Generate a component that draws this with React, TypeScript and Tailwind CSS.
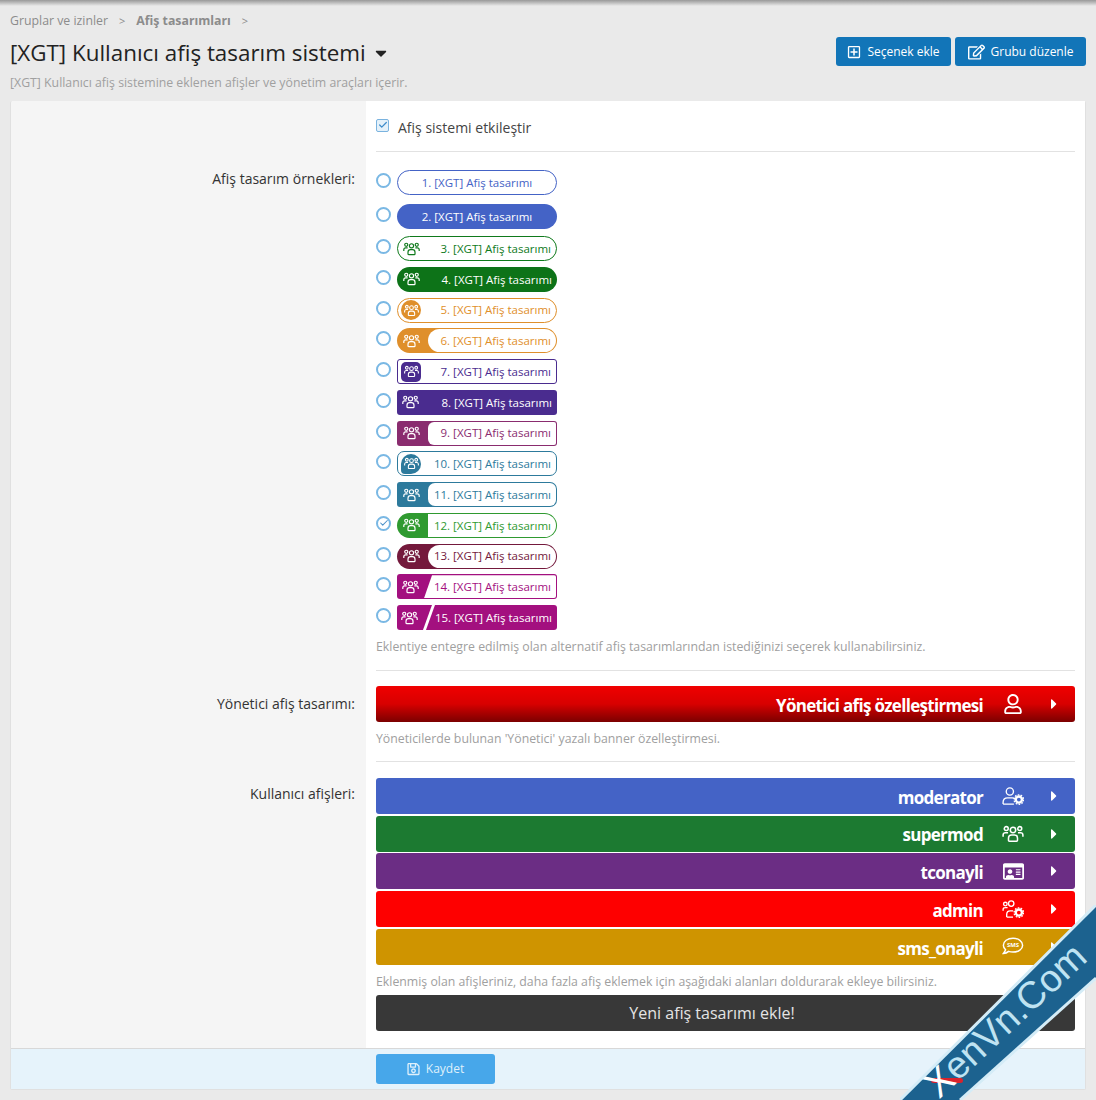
import React from 'react';
import { Check } from 'lucide-react';
import { FaCaretDown, FaCaretRight, FaRegEdit, FaRegIdCard, FaRegPlusSquare, FaRegSave, FaRegUser } from 'react-icons/fa';

const GroupIcon = ({ className = 'w-[17px] h-[14px]' }: { className?: string }) => (
  <svg viewBox="0 0 24 20" fill="none" stroke="currentColor" strokeWidth="1.7" className={className}>
    <circle cx="12" cy="5.5" r="3" />
    <circle cx="4.5" cy="4" r="2.2" />
    <circle cx="19.5" cy="4" r="2.2" />
    <path d="M7 17v-2.5C7 12.5 8.5 11 10.5 11h3c2 0 3.500 1.500 3.500 3.500V17c0 .6-.4 1-1 1H8c-.6 0-1-.4-1-1Z" />
    <path d="M1 13v-2c0-1.400 1-2.500 2.500-2.500h3" />
    <path d="M23 13v-2c0-1.400-1-2.500-2.500-2.500h-3" />
  </svg>
);

const CogMark = ({ cx, cy }: { cx: number; cy: number }) => (
  <g>
    <circle cx={cx} cy={cy} r="3.4" fill="none" stroke="currentColor" strokeWidth="2.600" />
    <circle cx={cx} cy={cy} r="5.300" fill="none" stroke="currentColor" strokeWidth="1.500" strokeDasharray="1.800 1.500" />
  </g>
);

const ModeratorIcon = () => (
  <svg viewBox="0 0 24 20" fill="none" stroke="currentColor" strokeWidth="1.500" className="w-[22px] h-[18px]">
    <circle cx="8.500" cy="5" r="4" />
    <path d="M1 19v-2c0-3 2-5 5-5h5c1.500 0 2.500.5 3.500 1.300M1 19h12" />
    <CogMark cx={18.500} cy={14} />
  </svg>
);

const AdminIcon = () => (
  <svg viewBox="0 0 24 20" fill="none" stroke="currentColor" strokeWidth="1.500" className="w-[22px] h-[18px]">
    <circle cx="10" cy="4" r="3" />
    <circle cx="3.500" cy="4.500" r="2" />
    <path d="M1 12v-1.500C1 9 2 8.500 3.500 8.500H6M5 19v-3c0-2.500 1.500-4 4-4h3M5 19h7" />
    <CogMark cx={18.500} cy={14} />
  </svg>
);

const SmsIcon = () => (
  <svg viewBox="0 0 24 20" fill="none" className="w-[22px] h-[19px]">
    <path d="M12 1C6 1 1.500 4.300 1.500 8.600c0 1.900.9 3.600 2.400 4.900-.4 1.600-1.500 3-2.400 4.100 2.200-.1 4.300-1 5.700-2.300 1.500.5 3.100.8 4.800.8 6 0 10.500-3.300 10.500-7.500S18 1 12 1Z" stroke="currentColor" strokeWidth="1.600" />
    <text x="12" y="10.800" textAnchor="middle" fill="currentColor" style={{ fontSize: 6.500, fontWeight: 700 }}>SMS</text>
  </svg>
);

const label = '[XGT] Afiş tasarımı';

const Banner = ({ n }: { n: number }) => {
  const text = `${n}. ${label}`;
  const base = "h-[25px] w-[160px] flex overflow-hidden text-[11.5px] leading-none";
  const txt = "flex-1 flex items-center justify-end pr-[5px] whitespace-nowrap";
  const seg = "w-[30px] pr-[3px] flex items-center justify-center text-white";

  switch (n) {
    case 1:
      return <div className={`${base} rounded-full border border-[#4463c6] bg-white text-[#4463c6] justify-center items-center`}>{text}</div>;
    case 2:
      return <div className={`${base} rounded-full bg-[#4463c6] text-white justify-center items-center`}>{text}</div>;
    case 3:
      return (
        <div className={`${base} rounded-full border border-[#0f7a1c] bg-white text-[#0f7a1c]`}>
          <div className="w-[29px] pr-[3px] flex items-center justify-center"><GroupIcon /></div>
          <div className={txt}>{text}</div>
        </div>
      );
    case 4:
      return (
        <div className={`${base} rounded-full bg-[#0d7318] text-white`}>
          <div className="w-[32px] pr-[4px] flex items-center justify-center"><GroupIcon /></div>
          <div className={txt}>{text}</div>
        </div>
      );
    case 5:
      return (
        <div className={`${base} rounded-full border border-[#df8f2b] bg-white text-[#df8f2b] pl-[3px] items-center`}>
          <div className="w-[20px] h-[20px] rounded-full bg-[#df8f2b] flex items-center justify-center text-white shrink-0"><GroupIcon className="w-[15px] h-[13px]" /></div>
          <div className={txt + ' h-full'}>{text}</div>
        </div>
      );
    case 6:
      return (
        <div className={`${base} rounded-full bg-[#df8f2b] p-px`}>
          <div className={seg}><GroupIcon /></div>
          <div className={`${txt} bg-white rounded-full text-[#df8f2b]`}>{text}</div>
        </div>
      );
    case 7:
      return (
        <div className={`${base} rounded-[3px] border border-[#4a2c8f] bg-white text-[#4a2c8f] pl-[3px] items-center`}>
          <div className="w-[20px] h-[20px] rounded-[5px] bg-[#4a2c8f] flex items-center justify-center text-white shrink-0"><GroupIcon className="w-[15px] h-[13px]" /></div>
          <div className={txt + ' h-full'}>{text}</div>
        </div>
      );
    case 8:
      return (
        <div className={`${base} rounded-[3px] bg-[#4a2c8f] text-white`}>
          <div className={seg}><GroupIcon /></div>
          <div className={`${txt} pr-[4px]`}>{text}</div>
        </div>
      );
    case 9:
      return (
        <div className={`${base} rounded-[3px] bg-[#8a2c6f] p-px`}>
          <div className={seg}><GroupIcon /></div>
          <div className={`${txt} bg-white rounded-l-[6px] rounded-r-[2px] text-[#8a2c6f]`}>{text}</div>
        </div>
      );
    case 10:
      return (
        <div className={`${base} rounded-[7px] border border-[#2d7a9c] bg-white text-[#2d7a9c] pl-[3px] items-center`}>
          <div className="w-[20px] h-[20px] rounded-[10px_10px_10px_4px] bg-[#2d7a9c] flex items-center justify-center text-white shrink-0"><GroupIcon className="w-[15px] h-[13px]" /></div>
          <div className={txt + ' h-full'}>{text}</div>
        </div>
      );
    case 11:
      return (
        <div className={`${base} rounded-[7px] rounded-l-[3px] bg-[#2d7a9c] p-px`}>
          <div className={seg}><GroupIcon /></div>
          <div className={`${txt} bg-white rounded-l-[7px] rounded-r-[6px] text-[#2d7a9c]`}>{text}</div>
        </div>
      );
    case 12:
      return (
        <div className={`${base} rounded-full bg-[#2f9a30] p-px`}>
          <div className={seg}><GroupIcon /></div>
          <div className={`${txt} bg-white rounded-r-full text-[#2f9a30]`}>{text}</div>
        </div>
      );
    case 13:
      return (
        <div className={`${base} rounded-full bg-[#74193c] p-px`}>
          <div className={seg}><GroupIcon /></div>
          <div className={`${txt} bg-white rounded-full text-[#74193c]`}>{text}</div>
        </div>
      );
    case 14:
      return (
        <div className={`${base} rounded-[3px] bg-[#a3107f] p-px`}>
          <div className="w-[26px] pr-[1px] flex items-center justify-center text-white"><GroupIcon /></div>
          <div className={`${txt} bg-white rounded-r-[2px] text-[#a3107f] [clip-path:polygon(8px_0,100%_0,100%_100%,0_100%)]`}>{text}</div>
        </div>
      );
    default:
      return (
        <div className={`${base} rounded-[3px] bg-[#a3107f] text-white`}>
          <div className="w-[26px] flex items-center justify-center"><GroupIcon /></div>
          <div className="w-[12px] bg-white [clip-path:polygon(9px_0,12px_0,3px_100%,0_100%)]" />
          <div className={txt}>{text}</div>
        </div>
      );
  }
};

const Radio = ({ checked }: { checked?: boolean }) => (
  <span className="w-[15px] h-[15px] rounded-full border-2 border-[#7ab8e4] bg-white flex items-center justify-center text-[#4a90c8] shrink-0 -mt-[4px]">
    {checked && <Check className="w-[10px] h-[10px]" strokeWidth={2.500} />}
  </span>
);

const Bar = ({ name, bg, icon }: { name: string; bg: string; icon: React.ReactNode }) => (
  <div className={`${bg} h-[36px] rounded-[3px] flex items-center justify-end text-white text-[17px] font-bold`}>
    <span className="tracking-[-0.7px] mt-[3px]">{name}</span>
    <span className="w-[22px] ml-[19px] flex justify-center">{icon}</span>
    <FaCaretRight className="w-[10px] h-[16px] ml-[25px] mr-[16px]" />
  </div>
);

const Row = ({ title, children, titleClass }: { title?: string; children: React.ReactNode; titleClass?: string }) => (
  <div className="flex">
    <div className={`w-[355px] shrink-0 pr-[11px] text-right text-[#333] text-[14px] ${titleClass ?? ''}`}>{title}</div>
    <div className="flex-1 bg-white pl-[10px] pr-[10px] min-w-0">{children}</div>
  </div>
);

const Hint = ({ children, className = '' }: { children: React.ReactNode; className?: string }) => (
  <p className={`text-[12.3px] text-[#a0a0a0] leading-[16px] ${className}`}>{children}</p>
);

export default function App() {
  return (
    <div className="relative h-[1100px] overflow-hidden bg-[#eaeaea] text-[#333] font-['Open_Sans',sans-serif]">
      <div className="h-[6px] bg-gradient-to-b from-[#999999] to-[#eaeaea]" />

      <div className="px-[10px]">
        <div className="flex items-center h-[16px] mt-[7px] text-[12.300px] text-[#8c8c8c] gap-[11px]">
          <span>Gruplar ve izinler</span>
          <span className="text-[11px]">&gt;</span>
          <span className="font-bold">Afiş tasarımları</span>
          <span className="text-[11px]">&gt;</span>
        </div>

        <div className="flex justify-between items-start mt-[8px] h-[33px]">
          <h1 className="flex items-center text-[22.400px] leading-[34px] text-[#222] mt-[-1px]">
            [XGT] Kullanıcı afiş tasarım sistemi
            <FaCaretDown className="w-[18px] h-[18px] ml-[6px] text-[#222]" />
          </h1>
          <div className="flex gap-[4px] text-white text-[12px]">
            <div className="h-[29px] w-[115px] rounded-[3px] bg-[#1275b8] flex items-center justify-center gap-[6px]">
              <FaRegPlusSquare className="w-[14px] h-[14px]" />
              Seçenek ekle
            </div>
            <div className="h-[29px] w-[131px] rounded-[3px] bg-[#1275b8] flex items-center justify-center gap-[6px]">
              <FaRegEdit className="w-[17px] h-[16px]" />
              Grubu düzenle
            </div>
          </div>
        </div>

        <Hint className="mt-[5px]">[XGT] Kullanıcı afiş sistemine eklenen afişler ve yönetim araçları içerir.</Hint>

        <div className="mt-[10px] w-[1076px] bg-[#f5f5f5] border border-[#e0e0e0] border-t-0 rounded-[2px]">
          <Row>
            <div className="h-[51px] border-b border-[#e2e2e2] flex items-center gap-[9px] text-[14px] text-[#444]">
              <span className="w-[13px] h-[13px] rounded-[2px] border border-[#7ab3df] bg-[#e4f1fa] flex items-center justify-center text-[#3d8ccb] -mt-[2px]">
                <Check className="w-[10px] h-[10px]" strokeWidth={3} />
              </span>
              <span className="mt-[2px]">Afiş sistemi etkileştir</span>
            </div>
          </Row>

          <Row title="Afiş tasarım örnekleri:" titleClass="pt-[16px]">
            <div className="pt-[18px] pb-[15px] border-b border-[#e2e2e2]">
              <div className="flex flex-col">
                {Array.from({ length: 15 }, (_, i) => i + 1).map((n) => (
                  <div key={n} className={`flex items-center gap-[6px] ${n === 1 ? 'mb-[9px]' : n === 2 ? 'mb-[7px]' : 'mb-[5.750px]'}`}>
                    <Radio checked={n === 12} />
                    <Banner n={n} />
                  </div>
                ))}
              </div>
              <Hint className="mt-[3px]">
                Eklentiye entegre edilmiş olan alternatif afiş tasarımlarından istediğinizi seçerek kullanabilirsiniz.
              </Hint>
            </div>
          </Row>

          <Row title="Yönetici afiş tasarımı:" titleClass="pt-[22px]">
            <div className="pt-[15px] pb-[14px] border-b border-[#e2e2e2]">
              <Bar name="Yönetici afiş özelleştirmesi" bg="bg-gradient-to-b from-[#f00000] via-[#d80000] to-[#7c0000]" icon={<FaRegUser className="w-[18px] h-[20px]" />} />
              <Hint className="mt-[9px]">Yöneticilerde bulunan 'Yönetici' yazalı banner özelleştirmesi.</Hint>
            </div>
          </Row>

          <Row title="Kullanıcı afişleri:" titleClass="pt-[21px]">
            <div className="pt-[16px] pb-[17px]">
              <div className="flex flex-col gap-[1.750px]">
                <Bar name="moderator" bg="bg-[#4463c6]" icon={<ModeratorIcon />} />
                <Bar name="supermod" bg="bg-[#1c7a31]" icon={<GroupIcon className="w-[22px] h-[18px]" />} />
                <Bar name="tconayli" bg="bg-[#6b2d84]" icon={<FaRegIdCard className="w-[21px] h-[19px]" />} />
                <Bar name="admin" bg="bg-[#fe0000]" icon={<AdminIcon />} />
                <Bar name="sms_onayli" bg="bg-[#cf9400]" icon={<SmsIcon />} />
              </div>
              <Hint className="mt-[9px]">
                Eklenmiş olan afişleriniz, daha fazla afiş eklemek için aşağıdaki alanları doldurarak ekleye bilirsiniz.
              </Hint>
              <div className="relative h-[36px] mt-[5px] pr-[27px] rounded-[3px] bg-[#383838] flex items-center justify-center text-[#e4e4e4] text-[16px]">
                Yeni afiş tasarımı ekle!
                <FaCaretRight className="absolute right-[16px] w-[10px] h-[16px]" />
              </div>
            </div>
          </Row>

          <div className="h-[41px] bg-[#e6f3fb] border-t border-[#d8d8d8] pl-[365px] flex items-center">
            <div className="w-[119px] h-[30px] rounded-[3px] bg-[#47a7ea] text-[#dff0fb] text-[12px] flex items-center justify-center gap-[6px]">
              <FaRegSave className="w-[13px] h-[14px]" />
              Kaydet
            </div>
          </div>
        </div>
      </div>

      {/* watermark ribbon */}
      <svg viewBox="0 0 196 195" className="absolute right-0 bottom-0 w-[196px] h-[195px]">
        <polygon points="0,195 196,0 196,73 60,195" fill="#1c628f" />
        <path d="M0 195 196 0" stroke="#d4ecf7" strokeWidth="3" />
        <path d="M60 195 196 73" stroke="#d4ecf7" strokeWidth="3" />
        <rect x="31" y="173" width="32" height="5" rx="2.500" fill="#d9232d" />
      </svg>
      <div className="absolute left-[900px] top-[1001px] w-[210px] text-center origin-center -rotate-[43deg] text-[38px] leading-none font-['Liberation_Sans',sans-serif] text-[#bfe3f2] whitespace-nowrap">
        <span className="text-white">X</span>enVn.Com
      </div>
    </div>
  );
}
